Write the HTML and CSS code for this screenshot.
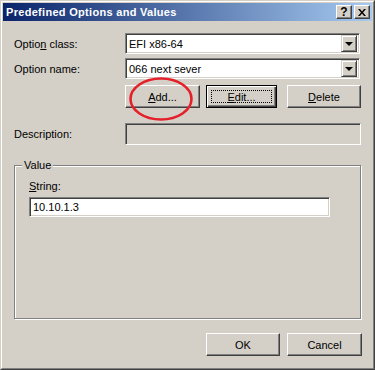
FILE: index.html
```html
<!DOCTYPE html>
<html>
<head>
<meta charset="utf-8">
<link rel="stylesheet" href="styles.css">
</head>
<body>
<div class="window">
  <div class="frame">
    <div class="titlebar">
      <span class="title">Predefined Options and Values</span>
      <div class="tbtns">
        <span class="tbtn">?</span>
        <span class="tbtn x">
          <svg width="8" height="7" viewBox="0 0 8 7"><path d="M0 0h2l2 2.5L6 0h2L5 3.5 8 7H6L4 4.5 2 7H0l3-3.5z" fill="#000"/></svg>
        </span>
      </div>
    </div>
    <div class="content">
      <div class="grid">
        <label class="lbl">Optio<u>n</u> class:</label>
        <div class="combo"><span class="val">EFI x86-64</span><span class="arrow"><i></i></span></div>
        <label class="lbl r2">Option name:</label>
        <div class="combo r2"><span class="val">066 next sever</span><span class="arrow"><i></i></span></div>
        <div></div>
        <div class="btnrow">
          <button class="btn add"><u>A</u>dd...</button>
          <button class="btn edit"><span class="focus"><u>E</u>dit...</span></button>
          <button class="btn del"><u>D</u>elete</button>
          <svg class="circle" width="66" height="46" viewBox="0 0 66 46"><ellipse cx="33" cy="23" rx="30.5" ry="20.5" fill="none" stroke="#e5202b" stroke-width="2.6"/></svg>
        </div>
        <label class="lbl desc">Description:</label>
        <div class="descbox"></div>
      </div>
      <div class="group">
        <div class="legend">Value</div>
        <div class="ginner">
          <div class="slbl"><u>S</u>tring:</div>
          <div class="text">10.10.1.3</div>
        </div>
      </div>
      <div class="footer">
        <button class="btn ok">OK</button>
        <button class="btn cancel">Cancel</button>
      </div>
    </div>
  </div>
</div>
</body>
</html>
```

FILE: styles.css
```css
* { box-sizing: border-box; }
html, body { margin: 0; padding: 0; }
body {
  width: 375px;
  height: 370px;
  background: #d4d0c8;
  font-family: "Liberation Sans", Arial, sans-serif;
  font-size: 11px;
  color: #000;
}
.window {
  width: 375px;
  height: 370px;
  border: 1px solid;
  border-color: #d4d0c8 #404040 #404040 #d4d0c8;
}
.frame {
  height: 100%;
  border: 1px solid;
  border-color: #fff #808080 #808080 #fff;
  padding: 1px;
}
.titlebar {
  height: 18px;
  background: linear-gradient(to right, #0a246a, #a6caf0);
  display: flex;
  align-items: center;
  justify-content: space-between;
  padding-left: 3px;
  padding-right: 2px;
}
.title {
  color: #fff;
  font-weight: bold;
  font-size: 11px;
  letter-spacing: 0.3px;
}
.tbtns { display: flex; gap: 2px; }
.tbtn {
  width: 16px;
  height: 14px;
  background: #d4d0c8;
  border: 1px solid;
  border-color: #fff #404040 #404040 #fff;
  box-shadow: inset -1px -1px 0 #808080;
  display: flex;
  align-items: center;
  justify-content: center;
  font-weight: bold;
  font-size: 12px;
  line-height: 1;
}
.content {
  padding: 12px 11px 0 11px;
}
.grid {
  display: grid;
  grid-template-columns: 111px 236px;
  align-items: center;
}
.lbl { white-space: nowrap; }
.r2 { margin-top: 4px; }
.combo {
  height: 21px;
  width: 235px;
  background: #fff;
  border: 1px solid;
  border-color: #808080 #fff #fff #808080;
  box-shadow: inset 1px 1px 0 #404040, inset -1px -1px 0 #d4d0c8;
  padding: 2px;
  display: flex;
  align-items: center;
}
.val { flex: 1; padding-left: 1px; }
.arrow {
  width: 16px;
  height: 17px;
  background: #d4d0c8;
  border: 1px solid;
  border-color: #d4d0c8 #404040 #404040 #d4d0c8;
  box-shadow: inset 1px 1px 0 #fff, inset -1px -1px 0 #808080;
  display: flex;
  align-items: center;
  justify-content: center;
}
.arrow i {
  width: 0; height: 0;
  border-left: 4px solid transparent;
  border-right: 4px solid transparent;
  border-top: 4px solid #000;
  margin-top: 1px;
}
.btnrow {
  position: relative;
  margin-top: 6px;
  display: flex;
}
.btn {
  font-family: inherit;
  font-size: 11px;
  color: #000;
  height: 23px;
  background: #d4d0c8;
  border: 1px solid;
  border-color: #fff #404040 #404040 #fff;
  box-shadow: inset -1px -1px 0 #808080;
  padding: 0;
  display: flex;
  align-items: center;
  justify-content: center;
}
.add { width: 75px; }
.edit {
  width: 71px;
  margin-left: 6px;
  border: 1px solid #000;
  box-shadow: inset 1px 1px 0 #fff, inset -1px -1px 0 #404040, inset -2px -2px 0 #808080;
  padding: 4px;
}
.focus {
  width: 100%;
  height: 100%;
  border: 1px dotted #000;
  display: flex;
  align-items: center;
  justify-content: center;
}
.del { width: 74px; margin-left: 10px; }
.circle {
  position: absolute;
  left: 3px;
  top: -9px;
  pointer-events: none;
}
.desc { margin-top: 15px; }
.descbox {
  margin-top: 15px;
  height: 22px;
  width: 236px;
  background: #d4d0c8;
  border: 1px solid;
  border-color: #808080 #fff #fff #808080;
  box-shadow: inset 1px 1px 0 #404040, inset -1px -1px 0 #d4d0c8;
}
.group {
  margin-top: 20px;
  width: 347px;
  height: 154px;
  border: 1px solid #808080;
  box-shadow: inset 1px 1px 0 #fff, 1px 1px 0 #fff;
}
.legend {
  margin-top: -7px;
  margin-left: 7px;
  padding: 0 2px;
  width: fit-content;
  background: #d4d0c8;
  line-height: 13px;
}
.ginner { padding: 8px 0 0 14px; }
.slbl { line-height: 13px; }
.text {
  margin-top: 4px;
  width: 301px;
  height: 20px;
  background: #fff;
  border: 1px solid;
  border-color: #808080 #fff #fff #808080;
  box-shadow: inset 1px 1px 0 #404040, inset -1px -1px 0 #d4d0c8;
  padding: 2px 3px;
  display: flex;
  align-items: center;
}
.footer {
  display: flex;
  justify-content: flex-end;
  gap: 7px;
  margin-top: 14px;
  padding-right: 0;
  margin-right: -1px;
}
.ok { width: 74px; }
.cancel { width: 75px; }
```
